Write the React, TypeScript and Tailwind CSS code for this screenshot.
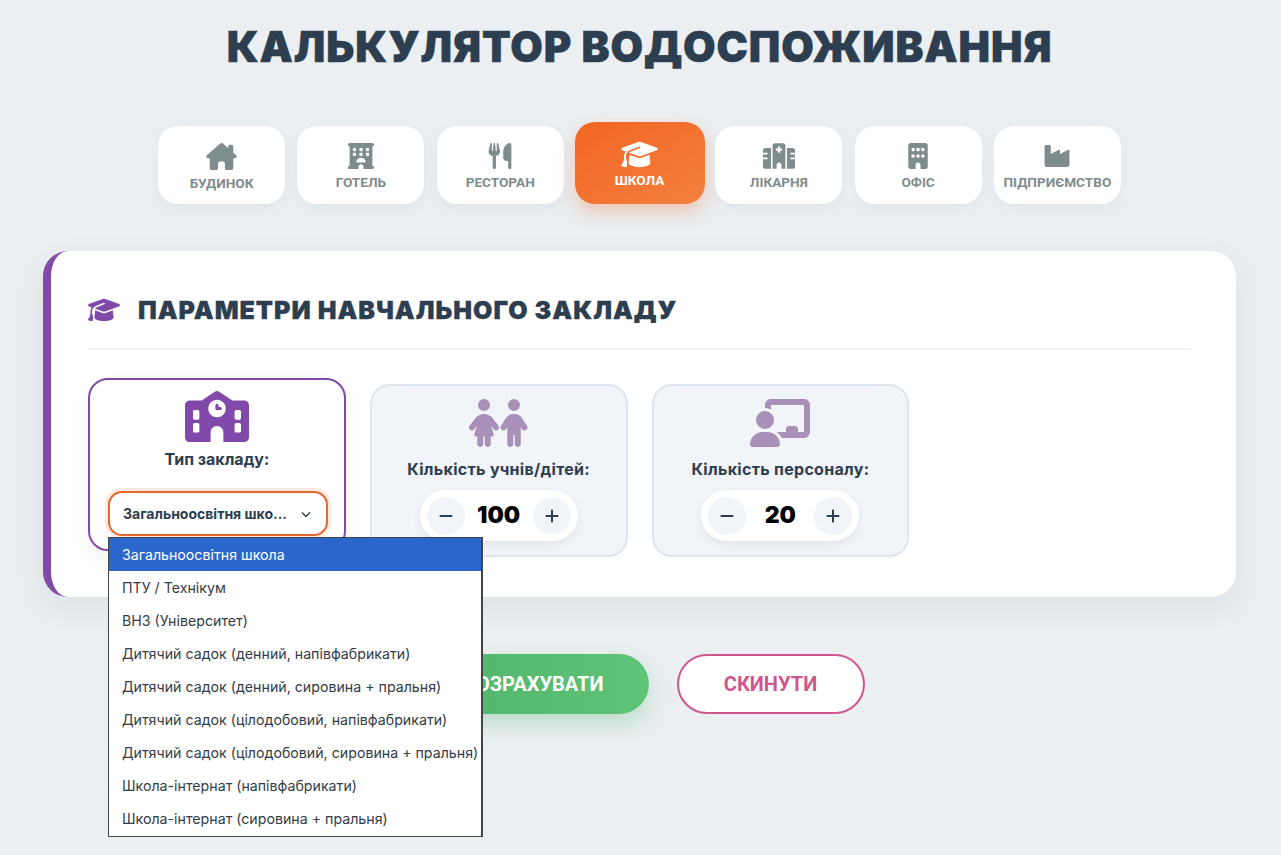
import { FaChildren, FaChalkboardUser, FaChevronDown, FaMinus, FaPlus, FaSchool } from "react-icons/fa6";
import {
  FaBuilding,
  FaGraduationCap,
  FaHospital,
  FaHotel,
  FaHouseChimney,
  FaIndustry,
  FaUtensils,
} from "react-icons/fa6";
import { IconType } from "react-icons";

type Tab = { label: string; icon: IconType; iconClass: string; active?: boolean };

const tabs: Tab[] = [
  { label: "БУДИНОК", icon: FaHouseChimney, iconClass: "h-[27px] w-[31px]" },
  { label: "ГОТЕЛЬ", icon: FaHotel, iconClass: "h-[26px] w-[26px]" },
  { label: "РЕСТОРАН", icon: FaUtensils, iconClass: "h-[26px] w-[26px]" },
  { label: "ШКОЛА", icon: FaGraduationCap, iconClass: "h-[29px] w-[37px]", active: true },
  { label: "ЛІКАРНЯ", icon: FaHospital, iconClass: "h-[26px] w-[32px]" },
  { label: "ОФІС", icon: FaBuilding, iconClass: "h-[26px] w-[26px]" },
  { label: "ПІДПРИЄМСТВО", icon: FaIndustry, iconClass: "h-[26px] w-[28px]" },
];

const options = [
  "Загальноосвітня школа",
  "ПТУ / Технікум",
  "ВНЗ (Університет)",
  "Дитячий садок (денний, напівфабрикати)",
  "Дитячий садок (денний, сировина + пральня)",
  "Дитячий садок (цілодобовий, напівфабрикати)",
  "Дитячий садок (цілодобовий, сировина + пральня)",
  "Школа-інтернат (напівфабрикати)",
  "Школа-інтернат (сировина + пральня)",
];

function TabButton({ tab }: { tab: Tab }) {
  const Icon = tab.icon;

  if (tab.active) {
    return (
      <button className="-mx-[1.5px] flex h-[82px] w-[130px] flex-col items-center self-end rounded-[20px] bg-gradient-to-br from-[#f26522] to-[#f5803e] pt-[18px] text-white shadow-[0_8px_18px_rgba(242,101,34,0.3)]">
        <Icon className={tab.iconClass} />
        <span className="mt-[3px] text-[13.6px] leading-[16px] font-bold">{tab.label}</span>
      </button>
    );
  }

  return (
    <button className="flex h-[78px] w-[127px] flex-col items-center self-end rounded-[20px] bg-white pt-[17px] text-[#7f8c8d] shadow-[0_4px_12px_rgba(44,62,80,0.06)]">
      <Icon className={tab.iconClass} />
      <span className="mt-[5px] text-[13.6px] leading-[16px] font-bold">{tab.label}</span>
    </button>
  );
}

function Stepper({ value }: { value: number }) {
  return (
    <div className="mt-[9px] flex h-[51px] w-[158px] items-center justify-between rounded-full bg-white px-[7px] shadow-[0_4px_10px_rgba(44,62,80,0.08)]">
      <button className="flex h-[38px] w-[38px] items-center justify-center rounded-full bg-[#f1f4f8] text-[#2c3e50]">
        <FaMinus size={16} />
      </button>
      <span className="font-['Inter',sans-serif] text-[23px] font-black text-black">{value}</span>
      <button className="flex h-[38px] w-[38px] items-center justify-center rounded-full bg-[#f1f4f8] text-[#2c3e50]">
        <FaPlus size={16} />
      </button>
    </div>
  );
}

export default function App() {
  return (
    <div className="min-h-screen bg-[#ebeff2] pt-[21px] pr-[45px] pl-[43px] font-['Roboto',sans-serif]">
      <h1 className="text-center font-['Inter',sans-serif] text-[42px] leading-[52px] font-black tracking-[0.9px] text-[#2c3e50] [-webkit-text-stroke:0.5px_#2c3e50]">
        КАЛЬКУЛЯТОР ВОДОСПОЖИВАННЯ
      </h1>

      <div className="mt-[49px] flex justify-center gap-[12.3px]">
        {tabs.map((tab) => (
          <TabButton key={tab.label} tab={tab} />
        ))}
      </div>

      <section className="mt-[47px] h-[346px] rounded-[25px] border-l-[8px] border-[#8149a9] bg-white pt-[43px] pr-[45px] pl-[37px] shadow-[0_10px_30px_rgba(44,62,80,0.08)]">
        <div className="flex items-center gap-[18px] border-b-2 border-[#eef1f4] pb-[22px]">
          <FaGraduationCap size={32} className="text-[#8149a9]" />
          <h2 className="font-['Inter',sans-serif] text-[25px] leading-[32px] font-black tracking-[1px] text-[#2c3e50] [-webkit-text-stroke:0.3px_#2c3e50]">
            ПАРАМЕТРИ НАВЧАЛЬНОГО ЗАКЛАДУ
          </h2>
        </div>

        <div className="mt-[34px] grid grid-cols-4 gap-6 font-['Inter',sans-serif]">
          <div className="relative h-[173px] -translate-y-[6px] rounded-[20px] border-2 border-[#8149a9] bg-white pt-[10px] shadow-[0_8px_20px_rgba(44,62,80,0.06)]">
            <div className="flex flex-col items-center">
              <FaSchool size={64} className="h-[53px] text-[#8149a9]" />
              <label className="mt-[4px] text-[16px] leading-[24px] font-bold text-[#2c3e50]">Тип закладу:</label>
            </div>
            <div className="absolute top-[111px] left-[18px] flex h-[45px] w-[220px] items-center justify-between rounded-[14px] border-2 border-[#e5672f] bg-white pr-[15px] pl-[13px] shadow-[0_0_0_3px_rgba(242,101,34,0.14)]">
              <span className="text-[14px] font-bold text-[#2c3e50]">Загальноосвітня шко...</span>
              <FaChevronDown size={10} className="text-[#2c3e50]" />
            </div>
            {/* opened list of the select, hangs over the cards and the buttons */}
            <ul className="absolute top-[157px] left-[18px] z-10 w-[375px] border border-r-2 border-[#444] bg-white pb-[1px] text-[14.2px] leading-[33px] text-[#333c47]">
              {options.map((option, index) => (
                <li key={option} className={index === 0 ? "bg-[#2a66cc] pl-[13px] whitespace-nowrap text-white" : "pl-[13px] whitespace-nowrap"}>
                  {option}
                </li>
              ))}
            </ul>
          </div>

          <div className="flex h-[173px] flex-col items-center rounded-[20px] border-2 border-[#dfe5ec] bg-[#f1f4f9] pt-[13px]">
            <FaChildren size={60} className="h-[48px] text-[#a890b8]" />
            <label className="mt-[10px] text-[16px] leading-[24px] font-bold tracking-[0.3px] text-[#2c3e50]">Кількість учнів/дітей:</label>
            <Stepper value={100} />
          </div>

          <div className="flex h-[173px] flex-col items-center rounded-[20px] border-2 border-[#dfe5ec] bg-[#f1f4f9] pt-[13px]">
            <FaChalkboardUser size={60} className="h-[48px] text-[#a890b8]" />
            <label className="mt-[10px] text-[16px] leading-[24px] font-bold tracking-[0.3px] text-[#2c3e50]">Кількість персоналу:</label>
            <Stepper value={20} />
          </div>
        </div>
      </section>

      <div className="mt-[57px] flex justify-center gap-[28px] text-[20px] font-bold">
        <button className="h-[60px] w-[234px] rounded-full bg-gradient-to-r from-[#4fb36b] to-[#5fc477] pr-[45px] text-right text-white shadow-[0_10px_22px_rgba(79,179,107,0.3)]">
          РОЗРАХУВАТИ
        </button>
        <button className="h-[60px] w-[188px] rounded-full border-2 border-[#d0568f] bg-white text-[#d0568f]">
          СКИНУТИ
        </button>
      </div>
    </div>
  );
}
